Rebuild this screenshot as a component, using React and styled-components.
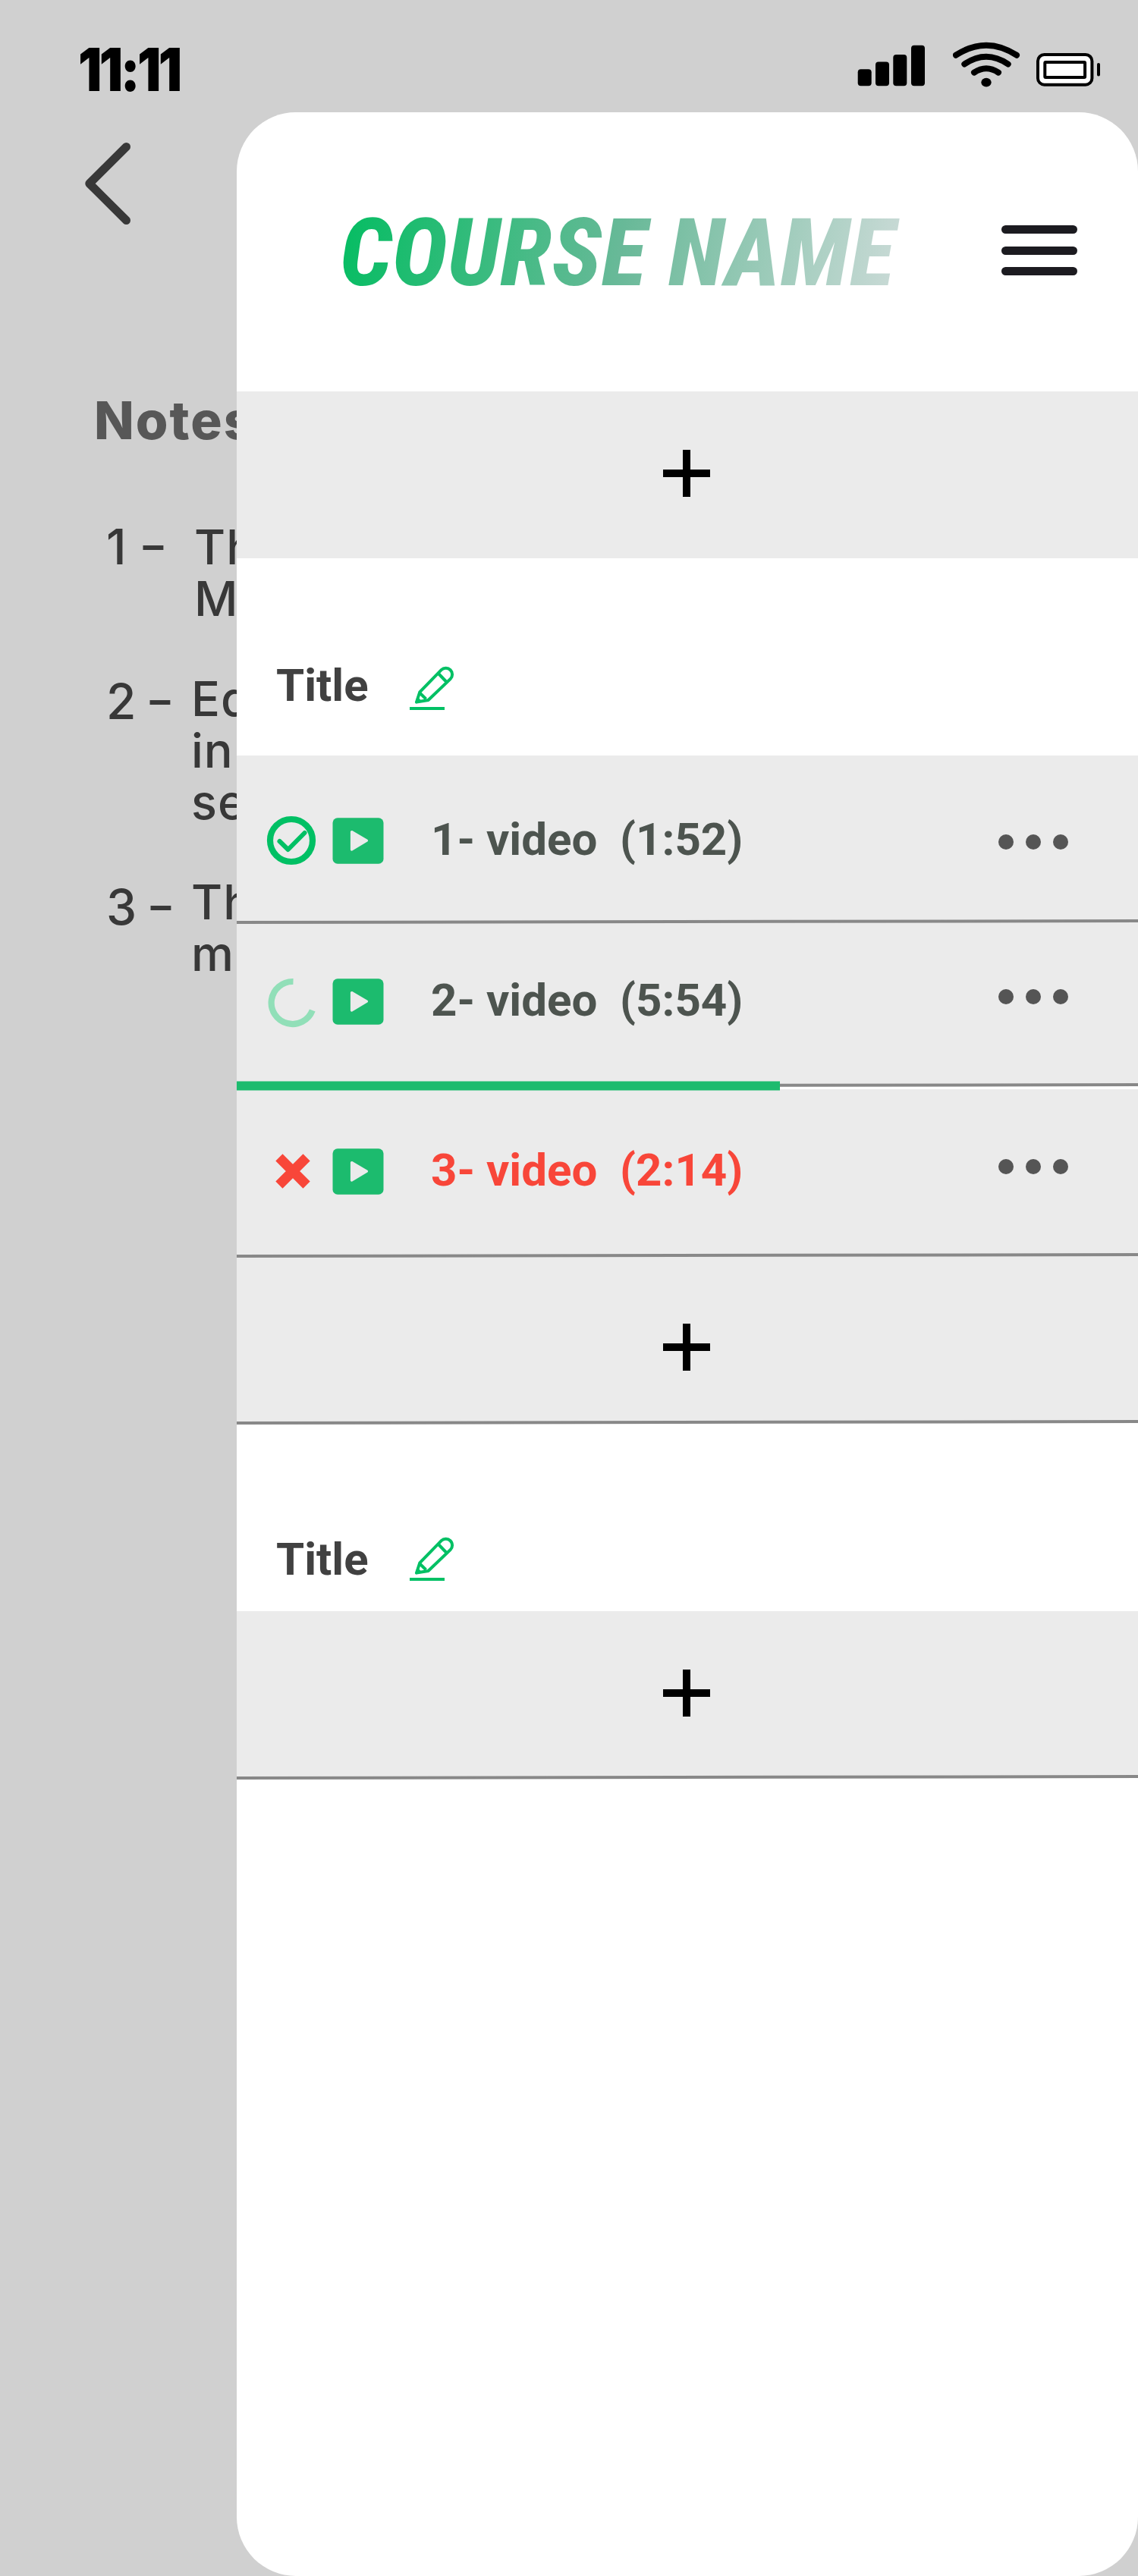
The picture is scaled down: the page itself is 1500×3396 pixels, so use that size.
import React from "react";
import styled, { createGlobalStyle } from "styled-components";

const GlobalStyle = createGlobalStyle`
  html, body { margin: 0; padding: 0; }
  body { background: #d0d0d0; }
  * { box-sizing: border-box; }
  svg { display: block; flex: none; }
`;

const Screen = styled.div`
  display: flex;
  flex-direction: column;
  width: 1500px;
  height: 3396px;
  overflow: hidden;
  background: #d0d0d0;
  font-family: Roboto, "Liberation Sans", sans-serif;
`;

const StatusBar = styled.header`
  display: flex;
  justify-content: space-between;
  height: 148px;
  padding: 52px 48px 0 103px;
`;

const Clock = styled.div`
  height: 80px;
  font: 900 78px/80px Inter, sans-serif;
  letter-spacing: -4px;
  color: #000;
  white-space: nowrap;
  transform: scaleX(0.89);
  transform-origin: left center;
`;

const StatusIcons = styled.div`
  display: flex;
  height: 64px;
`;

const Body = styled.div`
  display: flex;
  flex: 1;
`;

const Backdrop = styled.aside`
  width: 312px;
  overflow: hidden;
  padding-top: 37px;
  color: #383838;
  font-family: Inter, "Open Sans", sans-serif;
`;

const BackButton = styled.div`
  padding-left: 108px;
  height: 114px;
`;

const NotesHeading = styled.h2`
  margin: 215px 0 0 124px;
  font-size: 69px;
  font-weight: 800;
  line-height: 80px;
  letter-spacing: 2px;
  color: #575757;
  white-space: nowrap;
`;

const Note = styled.div`
  display: flex;
  margin-top: ${(p) => p.$top}px;
  padding-left: 140px;
`;

const NoteNumber = styled.span`
  flex: none;
  display: flex;
  gap: ${(p) => p.$gap}px;
  width: ${(p) => p.$width}px;
  padding-top: ${(p) => p.$drop}px;
  font-size: 64px;
  font-weight: 500;
  line-height: 68px;
  white-space: nowrap;
`;

const Dash = styled.span`
  line-height: 64px;
  transform: scaleX(0.84);
`;

const NoteText = styled.div`
  font-size: 63px;
  font-weight: 500;
  line-height: 68px;
  letter-spacing: 1px;
  white-space: pre;
  font-feature-settings: "cv11";
`;

const Drawer = styled.main`
  width: 1188px;
  height: 3248px;
  border-radius: 78px;
  background: #fff;
  overflow: hidden;
`;

const DrawerHeader = styled.div`
  display: flex;
  justify-content: space-between;
  height: 368px;
  padding: 112px 80px 0 132px;
`;

const CourseName = styled.h1`
  margin: 0;
  height: 148px;
  padding: 0 10px 0 4px;
  font: italic 800 124px/148px "Roboto Condensed", Roboto, sans-serif;
  font-stretch: 75%;
  letter-spacing: 0.4px;
  white-space: nowrap;
  color: transparent;
  background: linear-gradient(100deg, #06bd63 2%, #68b998 50%, #c9dad6 98%);
  -webkit-background-clip: text;
  background-clip: text;
`;

const MenuButton = styled.div`
  display: flex;
  flex-direction: column;
  gap: 16.5px;
  padding-top: 37px;
`;

const MenuBar = styled.span`
  width: 100px;
  height: 11px;
  border-radius: 6px;
  background: #1c1b20;
`;

const Divider = styled.div`
  height: 4px;
  background: #888;
  transform: translateY(-1px) skewY(-0.0965deg);
`;

const AddRow = styled.div`
  display: flex;
  flex-direction: column;
  justify-content: space-between;
  height: ${(p) => p.$height}px;
  padding-top: ${(p) => p.$top}px;
  background: linear-gradient(#ebebeb, #ebebeb) 0 0 / 100% calc(100% - ${(p) => (p.$line ? 3 : 0)}px) no-repeat;
`;

const PlusSlot = styled.div`
  display: flex;
  justify-content: center;
  padding-right: 2px;
`;

const SectionTitle = styled.div`
  display: flex;
  height: ${(p) => p.$height}px;
  padding: ${(p) => p.$top}px 0 0 52px;
`;

const SectionName = styled.h3`
  margin: 0;
  width: 176px;
  font-size: 60px;
  font-weight: 700;
  line-height: 60px;
  color: #414141;
`;

const PencilSlot = styled.div`
  padding-top: ${(p) => p.$drop}px;
`;

const VideoRow = styled.div`
  display: flex;
  flex-direction: column;
  justify-content: space-between;
  height: ${(p) => p.$height}px;
  padding-top: ${(p) => p.$top}px;
  background: #ebebeb;
`;

const VideoContent = styled.div`
  display: flex;
  align-items: center;
  height: 80px;
  padding: 0 92px 0 36px;
`;

const VideoName = styled.div`
  flex: 1;
  margin-left: 62px;
  padding-bottom: 2px;
  font-size: 60px;
  font-weight: 700;
  line-height: 78px;
  white-space: pre;
  color: ${(p) => p.$color};
`;

const PlaySlot = styled.div`
  margin-left: 18px;
`;

const More = styled.div`
  display: flex;
  gap: 16px;
  padding-top: ${(p) => Math.max(p.$shift, 0) * 2}px;
  padding-bottom: ${(p) => Math.max(-p.$shift, 0) * 2}px;
`;

const Dot = styled.span`
  width: 20px;
  height: 20px;
  border-radius: 50%;
  background: #555;
`;

const ProgressLine = styled.div`
  display: grid;
  height: 12px;
  margin-bottom: -2px;
  align-items: start;
  background: linear-gradient(#fff, #fff) 0 5px / 100% 5px no-repeat;
  > * { grid-area: 1 / 1; }
`;

const ProgressTrack = styled.div`
  margin-top: 3px;
  height: 4px;
  background: #888;
  transform: skewY(-0.0965deg);
`;

const ProgressFill = styled.div`
  z-index: 1;
  height: 12px;
  width: 716px;
  background: #1cbb6e;
  transform: translateY(-0.5px);
`;

const SignalIcon = () => (
  <svg width="126" height="64" viewBox="1130 52 126 64">
    <rect x="1130.7" y="91.3" width="18" height="22" rx="4" />
    <rect x="1154" y="81.5" width="18" height="31.8" rx="4" />
    <rect x="1177.3" y="72" width="18" height="41.3" rx="4" />
    <rect x="1201" y="59.7" width="18" height="53.6" rx="4" />
  </svg>
);

const WifiIcon = () => (
  <svg width="110" height="64" viewBox="1256 52 110 64" fill="none" stroke="#000" strokeWidth="8" strokeLinecap="round">
    <path d="M1260 72.7 Q1300 46.7 1340 72.7" />
    <path d="M1271.3 84.5 Q1300 65 1328.7 84.5" />
    <path d="M1284 95.6 Q1300 84.8 1316 95.6" />
    <ellipse cx="1300" cy="108.6" rx="6.7" ry="5.8" fill="#000" stroke="none" />
  </svg>
);

const BatteryIcon = () => (
  <svg width="86" height="64" viewBox="1366 52 86 64" fill="#fff" stroke="#000" strokeWidth="4">
    <rect x="1368" y="72" width="71.4" height="39.7" rx="8.5" />
    <rect x="1377.3" y="82" width="52.8" height="20" rx="1" />
    <rect x="1446" y="83" width="4" height="17.4" rx="2" fill="#000" stroke="none" />
  </svg>
);

const BackIcon = () => (
  <svg width="70" height="114" viewBox="108 185 70 114" fill="none" stroke="#383838" strokeWidth="11" strokeLinecap="round" strokeLinejoin="round">
    <path d="M166.5 193.5 L117.8 242 L166.5 290.5" />
  </svg>
);

const PlusIcon = () => (
  <svg width="62" height="62" viewBox="0 0 62 62">
    <path d="M26 0H36V26H62V36H36V62H26V36H0V26H26Z" />
  </svg>
);

const PencilIcon = () => (
  <svg width="60" height="60" viewBox="0 0 60 60" fill="none" stroke="#00c064" strokeWidth="4" strokeLinejoin="round">
    <path d="M9 47.5 L13.3 34.3 L41.7 5.2 A8.4 8.4 0 0 1 53.6 17.2 L24.5 45 Z" />
    <path d="M37.5 9.5 L48.5 21" />
    <path d="M13.3 35.5 L21.5 43.5" />
    <path d="M8.5 48.2 L10.5 42.4 L14.2 46.4 Z" strokeWidth="2.4" />
    <path d="M0 56H46" />
  </svg>
);

const PlayIcon = () => (
  <svg width="68" height="61" viewBox="0 0 68 61">
    <rect x="0.5" y="0.3" width="67" height="60.4" rx="6.5" fill="#1cbb6e" />
    <path d="M25.5 18.5 L45.5 30.2 L25.5 42 Z" fill="#ebebeb" stroke="#ebebeb" strokeWidth="3.2" strokeLinejoin="round" />
  </svg>
);

const DoneIcon = () => (
  <svg width="72" height="72" viewBox="0 0 72 72" fill="none" stroke="#00c064">
    <circle cx="36" cy="36" r="28" strokeWidth="8.2" />
    <path d="M20.5 37 L31.7 48 L53.5 26" strokeWidth="6" strokeLinecap="round" strokeLinejoin="round" />
  </svg>
);

const LoadingIcon = () => (
  <svg width="72" height="72" viewBox="0 0 72 72" fill="none" stroke="#91dfb8" strokeWidth="8.2">
    <path d="M38.5 10 A28 28 0 1 0 63.8 48" />
  </svg>
);

const FailedIcon = () => (
  <svg width="72" height="72" viewBox="0 0 72 72" fill="none" stroke="#f84639" strokeWidth="13">
    <path d="M19.9 17.9 L56.1 54.1 M56.1 17.9 L19.9 54.1" />
  </svg>
);

const STATUS_ICONS = { done: DoneIcon, loading: LoadingIcon, failed: FailedIcon };

const VIDEOS = [
  { name: "1- video  (1:52)", status: "done", height: 222, top: 72, shift: 2, color: "#4d544f" },
  { name: "2- video  (5:54)", status: "loading", height: 218, top: 62, shift: -6, color: "#4d544f", progress: true },
  { name: "3- video  (2:14)", status: "failed", height: 222, top: 68, shift: -6, color: "#f84639" },
];

function AddItem({ height, top, line }) {
  return (
    <AddRow $height={height} $top={top} $line={line}>
      <PlusSlot>
        <PlusIcon />
      </PlusSlot>
      {line && <Divider />}
    </AddRow>
  );
}

function Section({ height, top, drop }) {
  return (
    <SectionTitle $height={height} $top={top}>
      <SectionName>Title</SectionName>
      <PencilSlot $drop={drop}>
        <PencilIcon />
      </PencilSlot>
    </SectionTitle>
  );
}

function Video({ name, status, height, top, shift, color, progress }) {
  const StatusIcon = STATUS_ICONS[status];
  return (
    <VideoRow $height={height} $top={top}>
      <VideoContent>
        <StatusIcon />
        <PlaySlot>
          <PlayIcon />
        </PlaySlot>
        <VideoName $color={color}>{name}</VideoName>
        <More $shift={shift}>
          <Dot />
          <Dot />
          <Dot />
        </More>
      </VideoContent>
      {progress ? (
        <ProgressLine>
          <ProgressTrack />
          <ProgressFill />
        </ProgressLine>
      ) : (
        <Divider />
      )}
    </VideoRow>
  );
}

export default function App() {
  return (
    <Screen>
      <GlobalStyle />
      <StatusBar>
        <Clock>11:11</Clock>
        <StatusIcons>
          <SignalIcon />
          <WifiIcon />
          <BatteryIcon />
        </StatusIcons>
      </StatusBar>
      <Body>
        <Backdrop>
          <BackButton>
            <BackIcon />
          </BackButton>
          <NotesHeading>Notes</NotesHeading>
          <Note $top={93}>
            <NoteNumber $gap={19} $width={116} $drop={0}>
              <span>1</span>
              <Dash>–</Dash>
            </NoteNumber>
            <NoteText>{"Th\nM"}</NoteText>
          </Note>
          <Note $top={64}>
            <NoteNumber $gap={16} $width={112} $drop={4}>
              <span>2</span>
              <Dash>–</Dash>
            </NoteNumber>
            <NoteText>{"Ea\nin\nse"}</NoteText>
          </Note>
          <Note $top={64}>
            <NoteNumber $gap={16} $width={112} $drop={7}>
              <span>3</span>
              <Dash>–</Dash>
            </NoteNumber>
            <NoteText>{"Th\nm"}</NoteText>
          </Note>
        </Backdrop>
        <Drawer>
          <DrawerHeader>
            <CourseName>COURSE NAME</CourseName>
            <MenuButton>
              <MenuBar />
              <MenuBar />
              <MenuBar />
            </MenuButton>
          </DrawerHeader>
          <AddItem height={220} top={77} />
          <Section height={260} top={137.5} drop={4.5} />
          {VIDEOS.map((video) => (
            <Video key={video.name} {...video} />
          ))}
          <AddItem height={220} top={87} line />
          <Section height={246} top={147.5} drop={0.5} />
          <AddItem height={222} top={77} line />
        </Drawer>
      </Body>
    </Screen>
  );
}
